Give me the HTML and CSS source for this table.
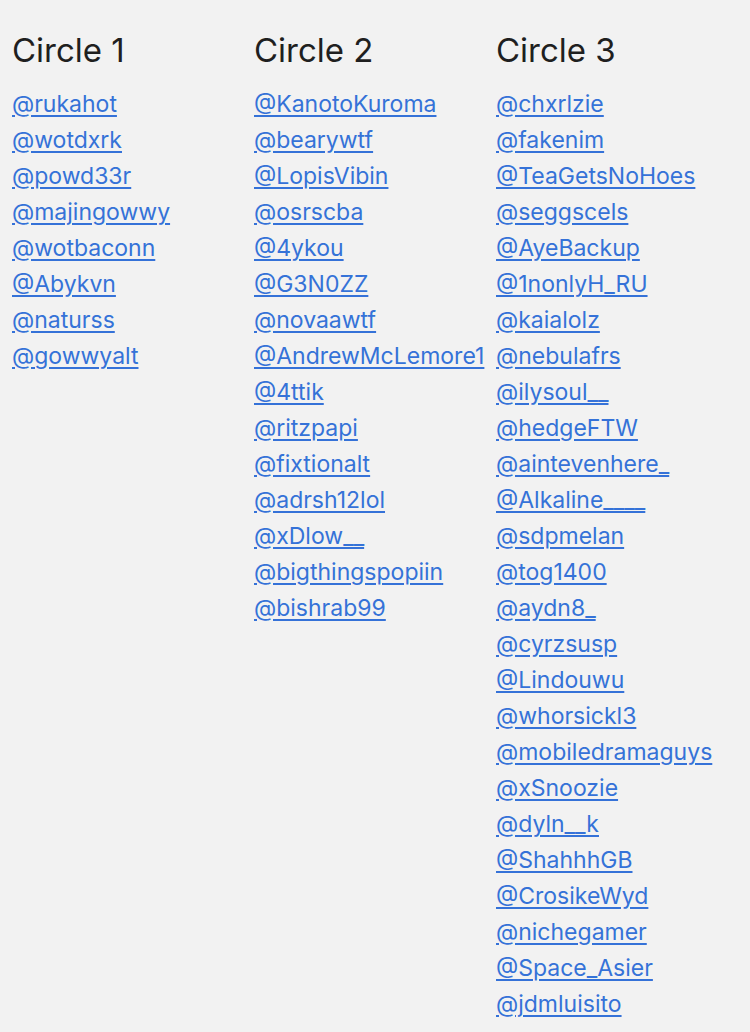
FILE: index.html
```html
<!DOCTYPE html>
<html>
<head>
<meta charset="utf-8">
<link rel="stylesheet" href="styles.css">
</head>
<body>
<div class="circles">
  <section class="circle">
    <h2 class="circle-title">Circle 1</h2>
    <ul class="handles">
      <li><a href="#">@rukahot</a></li>
      <li><a href="#">@wotdxrk</a></li>
      <li><a href="#">@powd33r</a></li>
      <li><a href="#">@majingowwy</a></li>
      <li><a href="#">@wotbaconn</a></li>
      <li><a href="#">@Abykvn</a></li>
      <li><a href="#">@naturss</a></li>
      <li><a href="#">@gowwyalt</a></li>
    </ul>
  </section>
  <section class="circle">
    <h2 class="circle-title">Circle 2</h2>
    <ul class="handles">
      <li><a href="#">@KanotoKuroma</a></li>
      <li><a href="#">@bearywtf</a></li>
      <li><a href="#">@LopisVibin</a></li>
      <li><a href="#">@osrscba</a></li>
      <li><a href="#">@4ykou</a></li>
      <li><a href="#">@G3N0ZZ</a></li>
      <li><a href="#">@novaawtf</a></li>
      <li><a href="#">@AndrewMcLemore1</a></li>
      <li><a href="#">@4ttik</a></li>
      <li><a href="#">@ritzpapi</a></li>
      <li><a href="#">@fixtionalt</a></li>
      <li><a href="#">@adrsh12lol</a></li>
      <li><a href="#">@xDlow__</a></li>
      <li><a href="#">@bigthingspopiin</a></li>
      <li><a href="#">@bishrab99</a></li>
    </ul>
  </section>
  <section class="circle">
    <h2 class="circle-title">Circle 3</h2>
    <ul class="handles">
      <li><a href="#">@chxrlzie</a></li>
      <li><a href="#">@fakenim</a></li>
      <li><a href="#">@TeaGetsNoHoes</a></li>
      <li><a href="#">@seggscels</a></li>
      <li><a href="#">@AyeBackup</a></li>
      <li><a href="#">@1nonlyH_RU</a></li>
      <li><a href="#">@kaialolz</a></li>
      <li><a href="#">@nebulafrs</a></li>
      <li><a href="#">@ilysoul__</a></li>
      <li><a href="#">@hedgeFTW</a></li>
      <li><a href="#">@aintevenhere_</a></li>
      <li><a href="#">@Alkaline____</a></li>
      <li><a href="#">@sdpmelan</a></li>
      <li><a href="#">@tog1400</a></li>
      <li><a href="#">@aydn8_</a></li>
      <li><a href="#">@cyrzsusp</a></li>
      <li><a href="#">@Lindouwu</a></li>
      <li><a href="#">@whorsickl3</a></li>
      <li><a href="#">@mobiledramaguys</a></li>
      <li><a href="#">@xSnoozie</a></li>
      <li><a href="#">@dyln__k</a></li>
      <li><a href="#">@ShahhhGB</a></li>
      <li><a href="#">@CrosikeWyd</a></li>
      <li><a href="#">@nichegamer</a></li>
      <li><a href="#">@Space_Asier</a></li>
      <li><a href="#">@jdmluisito</a></li>
    </ul>
  </section>
</div>
</body>
</html>
```
FILE: styles.css
```css
html, body {
  margin: 0;
  padding: 0;
  background: #f2f2f2;
}
body {
  font-family: Inter, "Liberation Sans", Arial, sans-serif;
}
.circles {
  display: grid;
  grid-template-columns: 242px 242px 242px;
  padding: 30px 12px 0 12px;
}
.circle-title {
  margin: 0 0 16px 0;
  font-size: 33px;
  font-weight: 400;
  line-height: 40px;
  color: #1f1f1f;
}
.handles {
  list-style: none;
  margin: 0;
  padding: 0;
}
.handles li {
  line-height: 36px;
  font-size: 23px;
  white-space: nowrap;
}
.handles a {
  color: #3572d8;
  text-decoration: underline;
  text-decoration-thickness: 1.5px;
  text-underline-offset: 3px;
}
```
